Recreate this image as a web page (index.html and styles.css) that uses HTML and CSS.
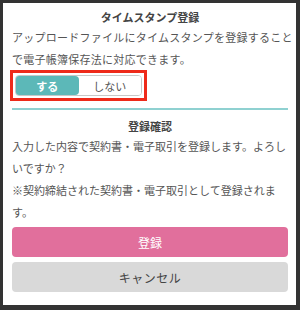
FILE: index.html
```html
<!DOCTYPE html>
<html lang="ja">
<head>
    <meta charset="UTF-8">
    <meta name="viewport" content="width=device-width, initial-scale=1.0">
    <title>タイムスタンプ登録</title>
    <link rel="stylesheet" href="styles.css">
</head>
<body>
    <div class="modal">
        <div class="section">
            <h2 class="section-title">タイムスタンプ登録</h2>
            <p class="text text-wide">アップロードファイルにタイムスタンプを登録すること<br>で電子帳簿保存法に対応できます。</p>
            <div class="highlight">
                <div class="toggle">
                    <button class="toggle-btn active">する</button>
                    <button class="toggle-btn">しない</button>
                </div>
            </div>
        </div>
        <hr class="divider">
        <div class="section">
            <h2 class="section-title">登録確認</h2>
            <p class="text">入力した内容で契約書・電子取引を登録します。よろしいですか？</p>
            <p class="text">※契約締結された契約書・電子取引として登録されます。</p>
        </div>
        <div class="actions">
            <button class="btn btn-primary">登録</button>
            <button class="btn btn-cancel">キャンセル</button>
        </div>
    </div>
</body>
</html>
```

FILE: styles.css
```css
body {
    margin: 0;
    background: #333333;
    font-family: "Noto Sans CJK JP", "Noto Sans", sans-serif;
    height: 310px;
    overflow: hidden;
}
.modal {
    box-sizing: border-box;
    width: 293px;
    height: 302px;
    margin: 3px 0 0 3px;
    padding: 5px 8px 0 9px;
    background: #ffffff;
}
.section-title {
    margin: 0;
    font-size: 11px;
    font-weight: bold;
    line-height: 18px;
    text-align: center;
    color: #444444;
}
.text {
    margin: 0;
    font-size: 11px;
    line-height: 22px;
    color: #555555;
}
.text-wide {
    white-space: nowrap;
    letter-spacing: 0.25px;
}
.highlight {
    display: inline-block;
    margin-left: -2px;
    padding: 2px;
    border: 3px solid #ee2a1a;
}
.toggle {
    display: flex;
    width: 127px;
    height: 21px;
    box-sizing: border-box;
    border: 1px solid #c8c8c8;
    border-radius: 4px;
    overflow: hidden;
}
.toggle-btn {
    flex: 1;
    border: none;
    background: #ffffff;
    font-family: inherit;
    font-size: 11px;
    color: #555555;
    padding: 0;
}
.toggle-btn.active {
    background: #5cb8b8;
    color: #ffffff;
    font-weight: bold;
    border-radius: 0 4px 4px 0;
}
.divider {
    margin: 7px 0 7px;
    border: none;
    height: 2px;
    background: #8fd1d1;
}
.actions {
    display: flex;
    flex-direction: column;
    gap: 5px;
    margin-top: 4px;
}
.btn {
    height: 30px;
    border: none;
    border-radius: 4px;
    font-family: inherit;
    font-size: 12px;
}
.btn-primary {
    background: #e16f9c;
    color: #ffffff;
}
.btn-cancel {
    background: #d9d9d9;
    color: #444444;
    letter-spacing: 0.5px;
}
```
